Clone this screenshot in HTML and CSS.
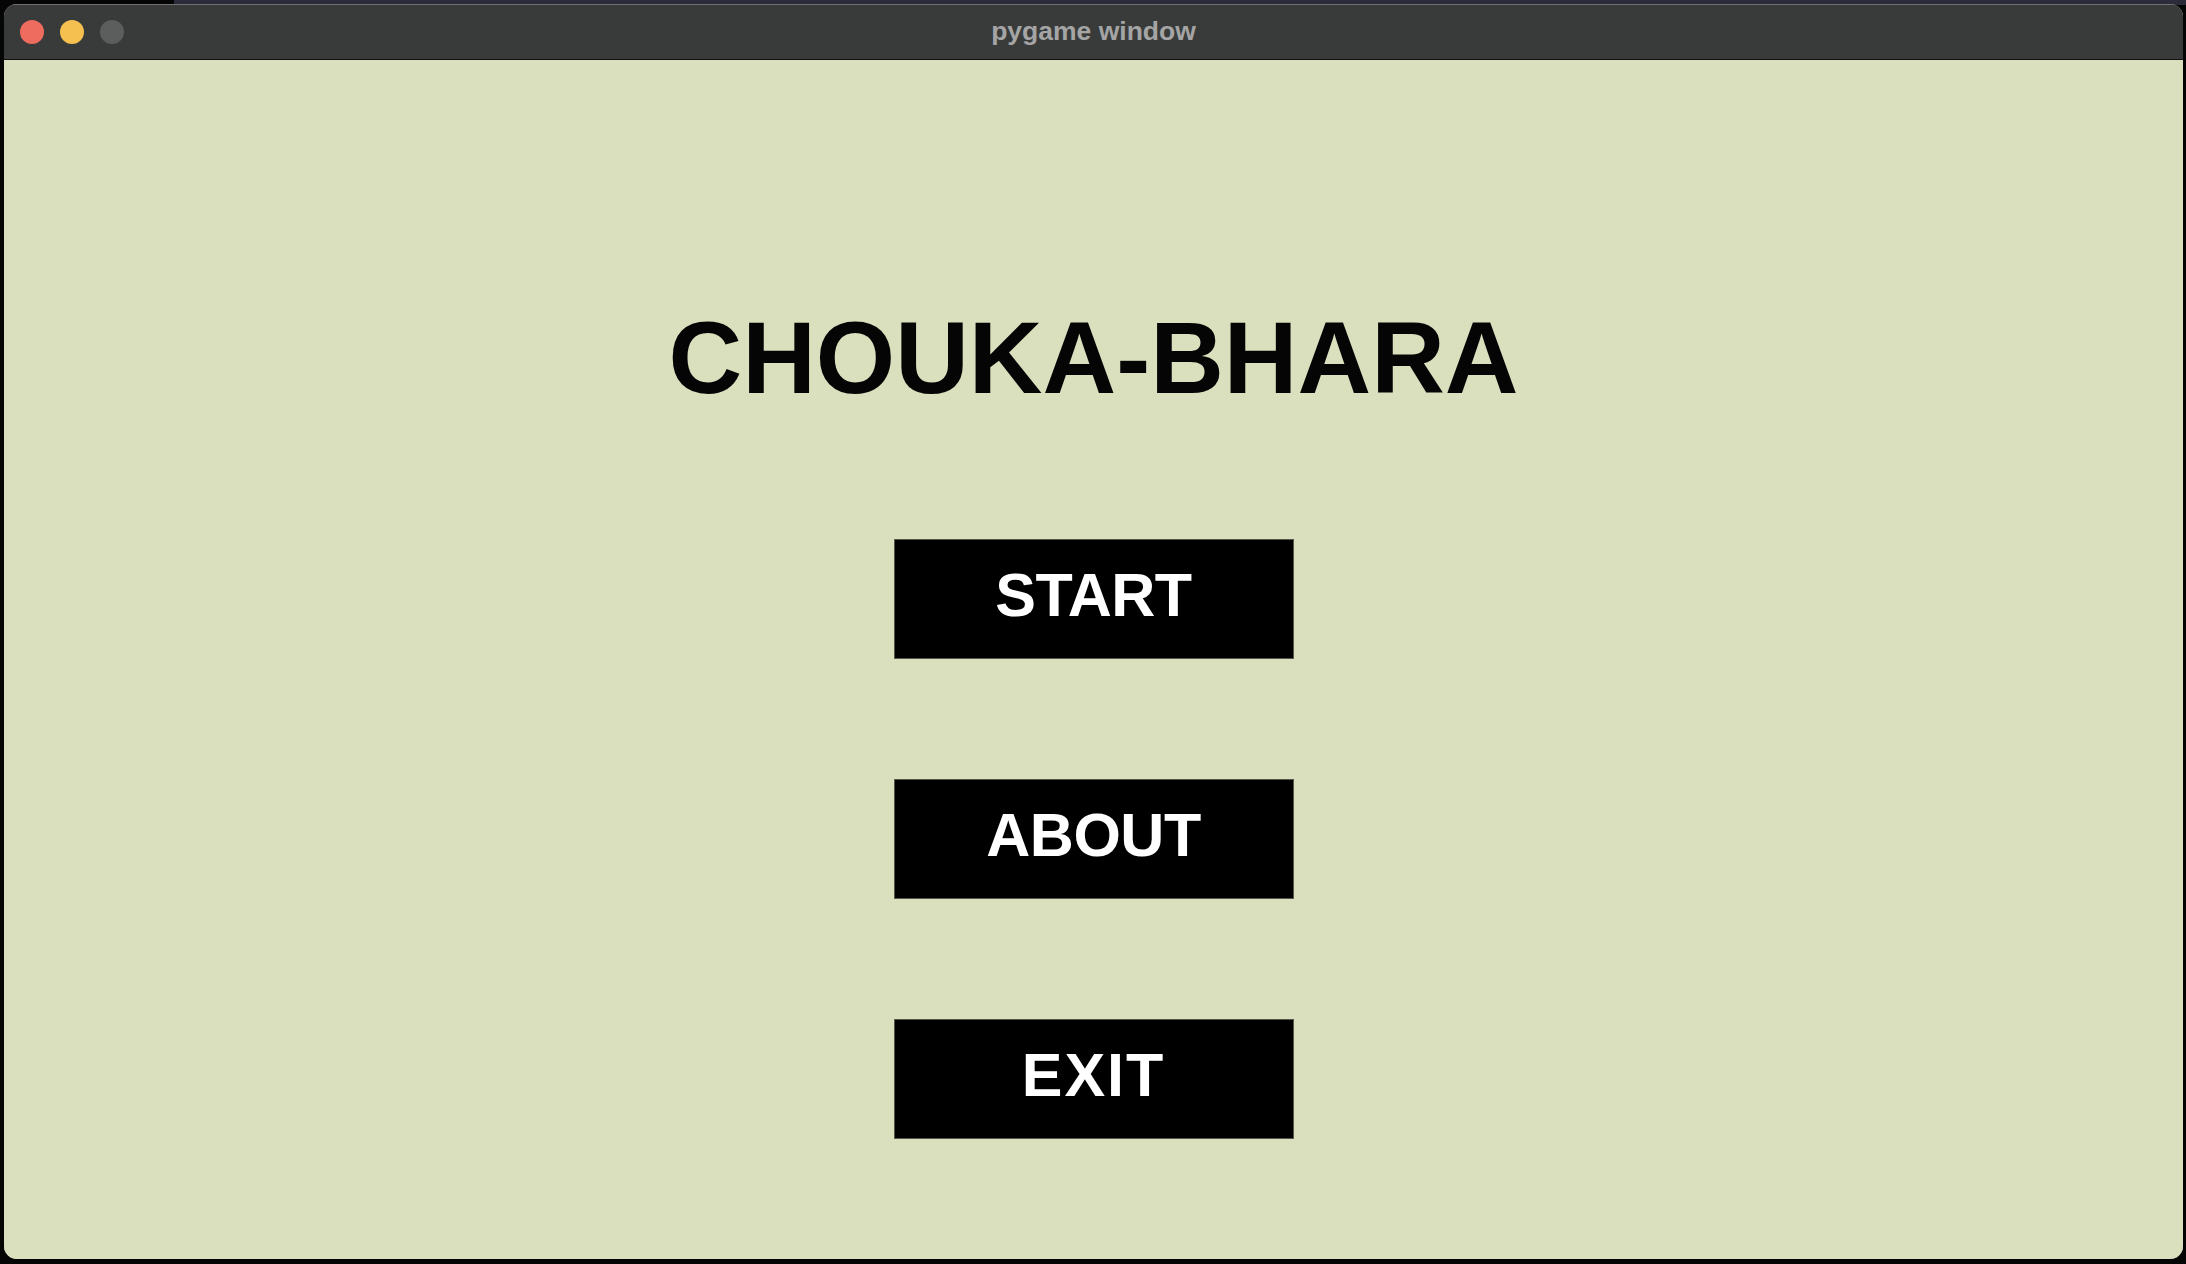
FILE: index.html
```html
<!DOCTYPE html>
<html>
<head>
<meta charset="utf-8">
<link rel="stylesheet" href="styles.css">
</head>
<body>
<div class="desktop">
  <div class="window">
    <div class="titlebar">
      <div class="lights">
        <span class="light red"></span>
        <span class="light yellow"></span>
        <span class="light gray"></span>
      </div>
      <div class="wtitle">pygame window</div>
    </div>
    <div class="content">
      <h1 class="game-title">CHOUKA-BHARA</h1>
      <div class="menu">
        <div class="btn">START</div>
        <div class="btn">ABOUT</div>
        <div class="btn btn-wide">EXIT</div>
      </div>
    </div>
  </div>
</div>
</body>
</html>
```
FILE: styles.css
```css
html, body {
  margin: 0;
  padding: 0;
  background: #050506;
}
body {
  width: 2186px;
  height: 1264px;
  overflow: hidden;
  position: relative;
}
body::before {
  content: "";
  position: absolute;
  left: 174px;
  right: 0;
  top: 0;
  height: 5px;
  background: #2b2b3a;
}
.desktop {
  position: relative;
  padding: 4px 3px 5px 4px;
  height: 1264px;
  box-sizing: border-box;
}
.window {
  height: 100%;
  border-radius: 13px;
  overflow: hidden;
  display: flex;
  flex-direction: column;
  box-shadow: inset 0 0 0 1px #6a6a6a;
  background: #dadfbd;
}
.titlebar {
  height: 56px;
  flex: none;
  background: #393b3a;
  border-top: 1px solid #727272;
  border-bottom: 1px solid #111;
  box-sizing: border-box;
  position: relative;
  display: flex;
  align-items: center;
  justify-content: center;
}
.lights {
  position: absolute;
  left: 16px;
  top: 15px;
  display: flex;
  gap: 16px;
}
.light {
  width: 24px;
  height: 24px;
  border-radius: 50%;
  display: block;
}
.red { background: #ee6b5f; }
.yellow { background: #f5c04f; }
.gray { background: #5c5e5d; }
.wtitle {
  font-family: "Liberation Sans", Arial, sans-serif;
  font-weight: bold;
  font-size: 26.5px;
  color: #a4a5a4;
  margin-top: -2px;
}
.content {
  flex: 1;
  display: flex;
  flex-direction: column;
  align-items: center;
  padding-top: 247px;
  background: #dadfbd;
}
.game-title {
  margin: 0;
  font-family: "Liberation Sans", Arial, sans-serif;
  font-weight: bold;
  font-size: 102px;
  line-height: 1;
  color: #050505;
  letter-spacing: 0;
}
.menu {
  margin-top: 130px;
  display: flex;
  flex-direction: column;
  gap: 120px;
}
.btn {
  width: 400px;
  height: 120px;
  box-sizing: border-box;
  background: #000;
  border: 1px solid #55564c;
  color: #fff;
  font-family: "Liberation Sans", Arial, sans-serif;
  font-weight: bold;
  font-size: 61px;
  line-height: 1;
  display: flex;
  align-items: center;
  justify-content: center;
  padding-bottom: 7px;
  letter-spacing: -0.5px;
}
.btn-wide {
  letter-spacing: 2px;
}
```
